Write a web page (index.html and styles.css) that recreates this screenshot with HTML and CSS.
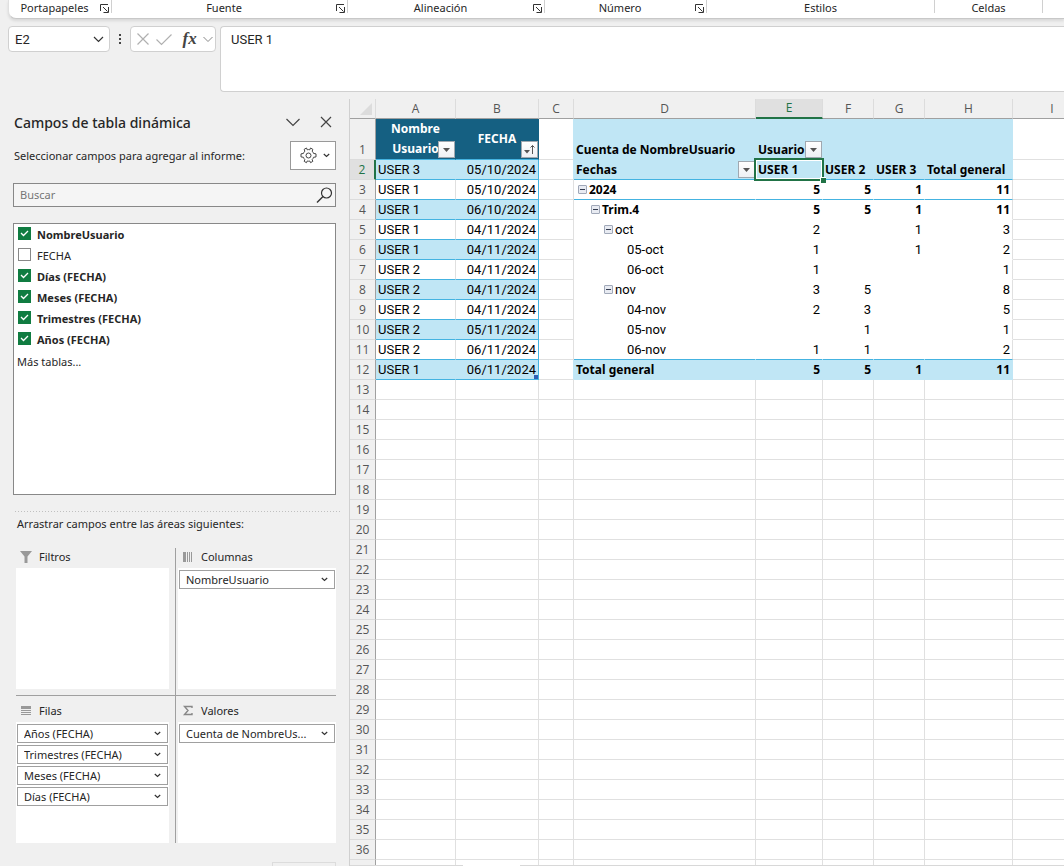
FILE: index.html
```html
<!DOCTYPE html>
<html lang="es">
<head>
    <meta charset="UTF-8">
    <meta name="viewport" content="width=device-width, initial-scale=1.0">
    <title>Tabla dinámica</title>
    <link rel="stylesheet" href="styles.css">
</head>
<body>
    <!-- Shared icons -->
    <svg width="0" height="0" class="sprite" aria-hidden="true">
        <symbol id="launcher" viewBox="0 0 9 9"><path d="M.5 7V.5H8M3 3l4.500 4.500M8.500 3v5.500H3.500" fill="none" stroke="#333"/></symbol>
        <symbol id="arrow" viewBox="0 0 9 5"><path d="M1 1h7L4.500 5z" fill="#555"/></symbol>
    </svg>

    <!-- Ribbon group names -->
    <div class="ribbon">
        <div class="group clipboard"><span>Portapapeles</span><button aria-label="Portapapeles"><svg width="9" height="9"><use href="#launcher"/></svg></button></div>
        <div class="group font"><span>Fuente</span><button aria-label="Fuente"><svg width="9" height="9"><use href="#launcher"/></svg></button></div>
        <div class="group align"><span>Alineación</span><button aria-label="Alineación"><svg width="9" height="9"><use href="#launcher"/></svg></button></div>
        <div class="group number"><span>Número</span><button aria-label="Número"><svg width="9" height="9"><use href="#launcher"/></svg></button></div>
        <div class="group styles"><span>Estilos</span></div>
        <div class="group cells"><span>Celdas</span></div>
    </div>

    <!-- Formula bar -->
    <div class="formula-bar">
        <select class="name-box" aria-label="Cuadro de nombres"><option>E2</option></select>
        <svg class="dots" width="20" height="26"><path d="M9 8h2v2H9zM9 12h2v2H9zM9 16h2v2H9z" fill="#444"/></svg>
        <div class="fx-box">
            <button aria-label="Cancelar"><svg width="14" height="14"><path d="M1.500 1.500l11 11M12.500 1.500l-11 11" fill="none" stroke="#b0b0b0" stroke-width="1.200"/></svg></button>
            <button aria-label="Introducir"><svg width="18" height="14"><path d="M1.500 7.500l5 5 10-10" fill="none" stroke="#b0b0b0" stroke-width="1.200"/></svg></button>
            <button class="fx" aria-label="Insertar función">fx</button>
            <button aria-label="Más funciones"><svg width="12" height="8"><path d="M1.500 2l4.500 4.500L10.500 2" fill="none" stroke="#888"/></svg></button>
        </div>
        <textarea class="formula" aria-label="Barra de fórmulas">USER 1</textarea>
    </div>

    <div class="main">
        <!-- Pivot table fields -->
        <aside class="pane">
            <div class="pane-title">
                <h2>Campos de tabla dinámica</h2>
                <button aria-label="Opciones del panel"><svg width="14" height="9"><path d="M.5 1L7 7.500 13.500 1" fill="none" stroke="#444" stroke-width="1.200"/></svg></button>
                <button aria-label="Cerrar"><svg width="12" height="12"><path d="M1 1l10 10M11 1L1 11" fill="none" stroke="#444" stroke-width="1.200"/></svg></button>
            </div>
            <div class="choose">
                <span>Seleccionar campos para agregar al informe:</span>
                <button class="tools" aria-label="Herramientas">
                    <svg width="17" height="17" viewBox="0 0 17 17" fill="none" stroke="#444"><path d="M6.500 1l.7 1.800q1.300-.5 2.600 0L10.500 1l2.300 1.300-.6 1.900q1 1 1.300 2.200l2.500.5v3l-2.500.4q-.3 1.300-1.300 2.200l.6 1.900-2.300 1.300-.7-1.700q-1.300.4-2.600 0l-.7 1.700-2.300-1.300.6-1.900q-1-.9-1.300-2.200L1 9.900v-3l2.500-.5q.3-1.200 1.300-2.200l-.6-1.900z"/><circle cx="8.500" cy="8.500" r="2.500"/></svg>
                    <svg width="7" height="5"><path d="M.8 1l2.700 2.500L6.200 1" fill="none" stroke="#333" stroke-width="1.200"/></svg>
                </button>
            </div>
            <div class="search">
                <input type="text" placeholder="Buscar" aria-label="Buscar">
                <svg width="17" height="17"><circle cx="10.500" cy="6" r="5" fill="none" stroke="#333" stroke-width="1.200"/><path d="M7 9.500L1 15.500" stroke="#333" stroke-width="1.400"/></svg>
            </div>
            <div class="fields">
                <label><input type="checkbox" checked><b>NombreUsuario</b></label>
                <label><input type="checkbox">FECHA</label>
                <label><input type="checkbox" checked><b>Días (FECHA)</b></label>
                <label><input type="checkbox" checked><b>Meses (FECHA)</b></label>
                <label><input type="checkbox" checked><b>Trimestres (FECHA)</b></label>
                <label><input type="checkbox" checked><b>Años (FECHA)</b></label>
                <a href="#">Más tablas...</a>
            </div>
            <div class="splitter"></div>
            <p class="drag">Arrastrar campos entre las áreas siguientes:</p>
            <div class="areas">
                <section class="area">
                    <h3><svg width="12" height="12"><path d="M0 0h12L7.500 5.500V12h-3V5.500z" fill="#999"/></svg>Filtros</h3>
                    <div class="drop"></div>
                </section>
                <section class="area">
                    <h3><svg width="12" height="12"><path d="M1 1h3v10H1zM5 1h1v10H5zM7 1h1v10H7zM9 1h1v10H9z" fill="#999"/></svg>Columnas</h3>
                    <div class="drop">
                        <select aria-label="Columna"><option>NombreUsuario</option></select>
                    </div>
                </section>
                <section class="area">
                    <h3><svg width="12" height="12"><path d="M1 1h10v3H1zM1 5h10v1H1zM1 7h10v1H1zM1 9h10v1H1z" fill="#999"/></svg>Filas</h3>
                    <div class="drop">
                        <select aria-label="Fila 1"><option>Años (FECHA)</option></select>
                        <select aria-label="Fila 2"><option>Trimestres (FECHA)</option></select>
                        <select aria-label="Fila 3"><option>Meses (FECHA)</option></select>
                        <select aria-label="Fila 4"><option>Días (FECHA)</option></select>
                    </div>
                </section>
                <section class="area">
                    <h3><svg width="12" height="12"><path d="M10 3V1.500H2.500L6 5.500 2.500 9.500H10V8" fill="none" stroke="#888" stroke-width="1.400"/></svg>Valores</h3>
                    <div class="drop">
                        <select aria-label="Valor"><option>Cuenta de NombreUs...</option></select>
                    </div>
                </section>
            </div>
            <button class="update" disabled aria-label="Actualizar"></button>
        </aside>

        <!-- Worksheet -->
        <div class="sheet">
            <div class="grid-wrap">
                <table class="grid">
                    <colgroup>
                        <col class="w-head"><col class="w-a"><col class="w-b"><col class="w-c"><col class="w-d"><col class="w-e"><col class="w-f"><col class="w-f"><col class="w-h"><col class="w-i">
                    </colgroup>
                    <thead>
                        <tr><th class="corner"><svg width="12" height="12"><path d="M12 0v12H0z" fill="#dcdcdc"/></svg></th><th>A</th><th>B</th><th>C</th><th>D</th><th class="active">E</th><th>F</th><th>G</th><th>H</th><th>I</th></tr>
                    </thead>
                    <tbody id="rows">
                        <tr class="first">
                            <th>1</th>
                            <td class="head">Nombre<br>Usuario<button class="filter" aria-label="Filtrar NombreUsuario"><svg width="9" height="5"><use href="#arrow"/></svg></button></td>
                            <td class="head mid">FECHA<button class="filter" aria-label="Filtrar FECHA"><svg width="13" height="11"><path d="M1 6h6L4 9.500z" fill="#555"/><path d="M9.500 10V1.500M7.500 3.500l2-2 2 2" fill="none" stroke="#555"/></svg></button></td>
                            <td class="edge-blue"></td>
                            <td class="pv">Cuenta de NombreUsuario</td>
                            <td class="pv">Usuario<button class="filter" aria-label="Filtrar Usuario"><svg width="9" height="5"><use href="#arrow"/></svg></button></td>
                            <td class="pv"></td><td class="pv"></td><td class="pv"></td><td></td>
                        </tr>
                        <tr class="band">
                            <th class="active">2</th><td>USER 3</td><td>05/10/2024</td><td class="edge-blue"></td>
                            <td class="pv line">Fechas<button class="filter" aria-label="Filtrar Fechas"><svg width="9" height="5"><use href="#arrow"/></svg></button></td>
                            <td class="pv line selected">USER 1<i class="handle"></i></td>
                            <td class="pv line">USER 2</td><td class="pv line">USER 3</td><td class="pv line">Total general</td><td></td>
                        </tr>
                        <tr class="data strong under">
                            <th>3</th><td>USER 1</td><td>05/10/2024</td><td></td>
                            <td class="l0"><button class="fold" aria-label="Contraer"></button>2024</td><td>5</td><td>5</td><td>1</td><td>11</td><td></td>
                        </tr>
                        <tr class="data band strong">
                            <th>4</th><td>USER 1</td><td>06/10/2024</td><td></td>
                            <td class="l1"><button class="fold" aria-label="Contraer"></button>Trim.4</td><td>5</td><td>5</td><td>1</td><td>11</td><td></td>
                        </tr>
                        <tr class="data">
                            <th>5</th><td>USER 1</td><td>04/11/2024</td><td></td>
                            <td class="l2"><button class="fold" aria-label="Contraer"></button>oct</td><td>2</td><td></td><td>1</td><td>3</td><td></td>
                        </tr>
                        <tr class="data band">
                            <th>6</th><td>USER 1</td><td>04/11/2024</td><td></td>
                            <td class="l3">05-oct</td><td>1</td><td></td><td>1</td><td>2</td><td></td>
                        </tr>
                        <tr class="data">
                            <th>7</th><td>USER 2</td><td>04/11/2024</td><td></td>
                            <td class="l3">06-oct</td><td>1</td><td></td><td></td><td>1</td><td></td>
                        </tr>
                        <tr class="data band">
                            <th>8</th><td>USER 2</td><td>04/11/2024</td><td></td>
                            <td class="l2"><button class="fold" aria-label="Contraer"></button>nov</td><td>3</td><td>5</td><td></td><td>8</td><td></td>
                        </tr>
                        <tr class="data">
                            <th>9</th><td>USER 2</td><td>04/11/2024</td><td></td>
                            <td class="l3">04-nov</td><td>2</td><td>3</td><td></td><td>5</td><td></td>
                        </tr>
                        <tr class="data band">
                            <th>10</th><td>USER 2</td><td>05/11/2024</td><td></td>
                            <td class="l3">05-nov</td><td></td><td>1</td><td></td><td>1</td><td></td>
                        </tr>
                        <tr class="data under">
                            <th>11</th><td>USER 2</td><td>06/11/2024</td><td></td>
                            <td class="l3">06-nov</td><td>1</td><td>1</td><td></td><td>2</td><td></td>
                        </tr>
                        <tr class="data band strong total">
                            <th>12</th><td>USER 1</td><td>06/11/2024<i class="corner-mark"></i></td><td class="edge-blue"></td>
                            <td>Total general</td><td>5</td><td>5</td><td>1</td><td>11</td><td></td>
                        </tr>
                    </tbody>
                </table>
            </div>
            <div class="tabs"><div class="tab"></div></div>
        </div>
    </div>

    <script>
        // Fill the rest of the sheet with empty rows
        const rows = document.getElementById('rows');
        for (let n = 13; n <= 37; n++) {
            const tr = document.createElement('tr');
            tr.innerHTML = '<th>' + (n < 37 ? n : '') + '</th>' + '<td></td>'.repeat(9);
            rows.appendChild(tr);
        }
    </script>
</body>
</html>
```

FILE: styles.css
```css
* {
    box-sizing: border-box;
}
body {
    margin: 0;
    height: 100vh;
    overflow: hidden;
    display: flex;
    flex-direction: column;
    background-color: #f0f0f0;
    color: #262626;
    font-family: "Noto Sans", "Open Sans", sans-serif;
    font-size: 11px;
}
button {
    padding: 0;
    border: none;
    background: none;
    font: inherit;
}
button svg {
    display: block;
}
.sprite {
    position: absolute;
}

/* Ribbon */
.ribbon {
    display: flex;
    flex: none;
    height: 19px;
    margin-left: 8px;
    background-color: #fff;
    border-bottom: 1px solid #c8c8c8;
    border-left: 1px solid #e0e0e0;
    border-radius: 0 0 0 8px;
    box-shadow: 0 2px 3px rgba(0, 0, 0, 0.1);
}
.group {
    display: flex;
    flex: none;
    align-items: center;
    height: 13px;
    padding-top: 3px;
    border-right: 1px solid #d0d0d0;
    line-height: 14px;
}
.group span {
    flex: 1;
    text-align: center;
}
.group button {
    margin-right: 2px;
}
.clipboard {
    width: 103px;
}
.font {
    width: 236px;
}
.align {
    width: 197px;
}
.number {
    width: 162px;
}
.styles {
    width: 228px;
}
.cells {
    width: 108px;
}

/* Formula bar */
.formula-bar {
    display: flex;
    flex: none;
    align-items: flex-start;
    height: 79px;
    padding: 7px 0 0 8px;
    font-family: Roboto, sans-serif;
    font-size: 13px;
}
select {
    appearance: none;
    color: inherit;
    font: inherit;
    border-radius: 0;
    background: #fff url("data:image/svg+xml,%3Csvg xmlns='http://www.w3.org/2000/svg' width='7' height='5'%3E%3Cpath d='M.8 1l2.700 2.500L6.200 1' fill='none' stroke='%23333' stroke-width='1.200'/%3E%3C/svg%3E") no-repeat right 6px center;
}
.name-box {
    width: 102px;
    height: 26px;
    padding: 0 6px;
    border: 1px solid #d0d0d0;
    border-radius: 4px;
    background-image: url("data:image/svg+xml,%3Csvg xmlns='http://www.w3.org/2000/svg' width='11' height='7'%3E%3Cpath d='M1 1l4.500 4.500L10 1' fill='none' stroke='%23333' stroke-width='1.200'/%3E%3C/svg%3E");
    background-position: right 5px center;
}
.fx-box {
    display: flex;
    align-items: center;
    justify-content: space-between;
    width: 86px;
    height: 26px;
    padding: 0 1px 0 5px;
    border: 1px solid #d0d0d0;
    border-radius: 4px;
    background-color: #fff;
}
.fx {
    padding-left: 4px;
    font: italic bold 17px "Liberation Serif", serif;
    color: #444;
}
.formula {
    flex: 1;
    height: 66px;
    margin-left: 4px;
    padding: 4px 10px;
    border: 1px solid #d0d0d0;
    border-right: none;
    border-radius: 4px 0 0 4px;
    color: inherit;
    font: inherit;
    line-height: 18px;
    resize: none;
}

/* Fields pane */
.main {
    display: flex;
    flex: 1;
    min-height: 0;
}
.pane {
    flex: none;
    width: 349px;
    padding: 14px 13px 0;
    overflow: hidden;
}
.pane-title {
    display: flex;
    align-items: center;
    gap: 20px;
    height: 20px;
    padding: 0 4px 0 1px;
}
.pane-title h2 {
    flex: 1;
    margin: 0;
    font-size: 14px;
    font-weight: 500;
}
.choose {
    display: flex;
    align-items: center;
    justify-content: space-between;
    height: 29px;
    margin-top: 9px;
    padding-left: 1px;
}
.tools {
    display: flex;
    align-items: center;
    justify-content: center;
    gap: 6px;
    width: 46px;
    height: 29px;
    padding-left: 3px;
    border: 1px solid #999;
    background-color: #fff;
}
.search {
    display: flex;
    align-items: center;
    height: 24px;
    margin-top: 13px;
    padding-right: 2px;
    border: 1px solid #888;
    background-color: #f5f5f5;
}
.search input {
    flex: 1;
    padding: 0 6px 2px;
    border: none;
    outline: none;
    background: none;
    font: inherit;
}
.fields {
    height: 272px;
    margin-top: 16px;
    padding-left: 3px;
    border: 1px solid #888;
    background-color: #fff;
}
.fields label {
    display: flex;
    align-items: center;
    gap: 6px;
    height: 21px;
}
.fields a {
    display: block;
    line-height: 24px;
    color: inherit;
    text-decoration: none;
}
.fields input {
    appearance: none;
    width: 13px;
    height: 13px;
    margin: 0 0 2px 1px;
    border: 1px solid #888;
    background-color: #fff;
}
.fields input:checked {
    border-color: #107c41;
    background: #107c41 url("data:image/svg+xml,%3Csvg xmlns='http://www.w3.org/2000/svg' width='11' height='11'%3E%3Cpath d='M2 5l2.500 2.500 4.500-4.500' fill='none' stroke='white' stroke-width='1.300'/%3E%3C/svg%3E") no-repeat center;
}
.splitter {
    height: 1px;
    margin: 16px -4px 0 2px;
    background: repeating-linear-gradient(to right, #c0c0c0 0 1px, transparent 1px 3px);
}
.drag {
    margin: 4px 0 0 4px;
    line-height: 16px;
}
.areas {
    display: grid;
    grid-template-columns: 160px 1fr;
    margin: 16px 0 0 3px;
}
.area {
    padding-left: 2px;
}
.area:nth-child(odd) {
    padding: 0 6px 0 0;
    border-right: 1px solid #a0a0a0;
}
.area:nth-child(-n+2) {
    padding-bottom: 6px;
    border-bottom: 1px solid #a0a0a0;
}
.area:nth-child(n+3) {
    padding-top: 6px;
}
.area h3 {
    display: flex;
    align-items: center;
    gap: 7px;
    margin: 0;
    padding: 0 0 2px 4px;
    font-size: 11px;
    font-weight: normal;
    line-height: 18px;
}
.drop {
    display: flex;
    flex-direction: column;
    gap: 2px;
    height: 121px;
    padding: 2px 1px;
    background-color: #fff;
}
.drop select {
    height: 19px;
    padding: 0 6px;
    border: 1px solid #a0a0a0;
}
.update {
    display: block;
    width: 64px;
    height: 24px;
    margin: 19px 0 0 auto;
    border: 1px solid #dcdcdc;
}

/* Worksheet */
.sheet {
    display: flex;
    flex: 1;
    flex-direction: column;
    min-width: 0;
    margin-top: 1px;
    border-left: 1px solid #d0d0d0;
}
.grid-wrap {
    flex: 1;
    min-height: 0;
    overflow: hidden;
}
.grid {
    width: 742px;
    min-width: 100%;
    table-layout: fixed;
    border-collapse: separate;
    border-spacing: 0;
    background-color: #fff;
    color: #000;
    font-family: Roboto, sans-serif;
    font-size: 13px;
    line-height: 19px;
}
.w-head {
    width: 26px;
}
.w-a {
    width: 80px;
}
.w-b {
    width: 83px;
}
.w-c {
    width: 35px;
}
.w-d {
    width: 182px;
}
.w-e {
    width: 67px;
}
.w-f {
    width: 51px;
}
.w-h {
    width: 88px;
}
.grid th {
    height: 20px;
    padding: 0;
    background-color: #f0f0f0;
    color: #555;
    font-family: "Open Sans", sans-serif;
    font-size: 12px;
    font-weight: normal;
    vertical-align: bottom;
}
.grid thead th {
    border-right: 1px solid #dcdcdc;
    border-bottom: 1px solid #a0a0a0;
}
.grid tbody th {
    border-right: 1px solid #a0a0a0;
    border-bottom: 1px solid #dcdcdc;
}
.grid .corner {
    padding: 0 3px 3px 0;
    line-height: 0;
    text-align: right;
}
.corner svg {
    display: inline-block;
    vertical-align: bottom;
}
.grid thead .active {
    background-color: #e0e0e0;
    border-bottom: 2px solid #217346;
    color: #217346;
    line-height: 18px;
}
.grid tbody .active {
    background-color: #e0e0e0;
    border-right: 2px solid #217346;
    color: #217346;
}
.grid td {
    position: relative;
    height: 20px;
    padding: 0 2px;
    border-right: 1px solid #e0e0e0;
    border-bottom: 1px solid #e0e0e0;
    vertical-align: bottom;
    white-space: nowrap;
}
.first th,
.grid .first td {
    height: 41px;
}
.grid .head {
    background-color: #156082;
    border-color: #156082;
    border-bottom-color: #44b3e1;
    color: #fff;
    font-family: "Noto Sans", sans-serif;
    font-size: 12px;
    font-weight: bold;
    line-height: 20px;
    text-align: center;
}
.grid .mid {
    vertical-align: middle;
}
.grid .pv {
    background-color: #c0e6f5;
    border-color: #c0e6f5;
    font-family: "Noto Sans", sans-serif;
    font-size: 12px;
    font-weight: bold;
}
.grid .edge-blue {
    border-right-color: #c0e6f5;
}
.grid .line {
    border-bottom-color: #44b3e1;
}
.filter {
    position: absolute;
    right: 0;
    bottom: 1px;
    display: flex;
    align-items: center;
    justify-content: center;
    width: 17px;
    height: 17px;
    border: 1px solid #a0a8b0;
    background: linear-gradient(#fff, #eef0f4);
}

/* Source table, columns A and B */
.data td:nth-child(2),
.data td:nth-child(3),
.band td:nth-child(2),
.band td:nth-child(3) {
    border-bottom-color: #44b3e1;
}
.data td:nth-child(3),
.band td:nth-child(3) {
    border-right-color: #44b3e1;
    text-align: right;
}
.band td:nth-child(2),
.band td:nth-child(3) {
    background-color: #c0e6f5;
}
.band td:nth-child(2) {
    border-right-color: #c0e6f5;
}
.corner-mark {
    position: absolute;
    right: 0;
    bottom: 0;
    width: 4px;
    height: 4px;
    background-color: #2f5fb5;
}

/* Pivot table, columns D to H */
.data td:nth-child(n+5):nth-child(-n+9) {
    border-color: #fff;
}
.data td:nth-child(n+6) {
    text-align: right;
}
.grid .data td:nth-child(9) {
    border-right-color: #e0e0e0;
}
.strong td:nth-child(n+5) {
    font-family: "Noto Sans", sans-serif;
    font-size: 12px;
    font-weight: bold;
}
.data.under td:nth-child(n+5):nth-child(-n+9) {
    border-bottom-color: #44b3e1;
}
.data.total td:nth-child(n+5):nth-child(-n+9) {
    background-color: #c0e6f5;
    border-color: #c0e6f5;
}
.grid .l0 {
    padding-left: 4px;
}
.grid .l1 {
    padding-left: 17px;
}
.grid .l2 {
    padding-left: 30px;
}
.grid .l3 {
    padding-left: 53px;
}
.fold {
    width: 9px;
    height: 9px;
    margin-right: 2px;
    border: 1px solid #a0a8b8;
    border-radius: 1px;
    background: linear-gradient(#333c50, #333c50) no-repeat center / 5px 1px, #e8ebf2;
    vertical-align: 1px;
}
.selected::after {
    content: "";
    position: absolute;
    z-index: 1;
    inset: -2px;
    border: 2px solid #217346;
    box-shadow: inset 0 0 0 1px #fff;
}
.handle {
    position: absolute;
    z-index: 2;
    right: -4px;
    bottom: -4px;
    width: 6px;
    height: 6px;
    border: 1px solid #fff;
    border-width: 1px 0 0 1px;
    background-color: #217346;
}

/* Sheet tabs */
.tabs {
    flex: none;
    height: 1px;
    background-color: #d8d8d8;
}
.tab {
    width: 57px;
    height: 1px;
    margin-left: 113px;
    background-color: #fff;
}
```
